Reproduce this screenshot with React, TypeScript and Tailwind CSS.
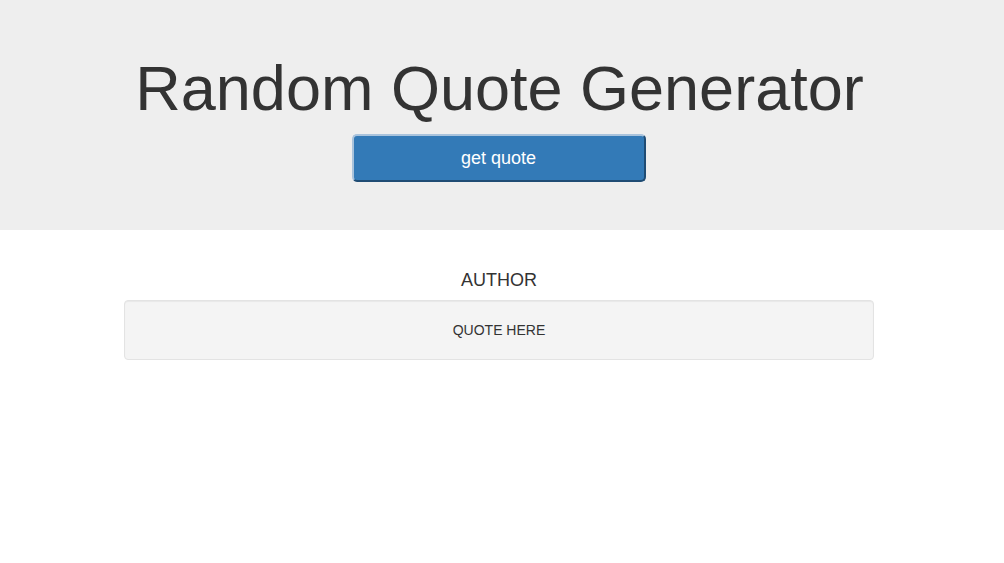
import React, { useState } from 'react';

const App: React.FC = () => {
  const [author] = useState('AUTHOR');
  const [quote] = useState('QUOTE HERE');

  return (
    <div className="min-h-[563px] bg-white text-[#333] font-['Liberation_Sans',Arial,sans-serif]">
      <div className="bg-[#eeeeee] h-[230px] pt-[54px] flex flex-col items-center pr-[5px]">
        <h1 className="text-[63px] leading-[69px] font-normal text-[#333]">Random Quote Generator</h1>
        <button className="mt-[11px] mr-[2px] w-[294px] h-[48px] bg-[#337ab7] text-white text-[18px] leading-[20px] rounded-[5px] border-2 border-t-[#a9c3dc] border-l-[#a9c3dc] border-b-[#1f4c74] border-r-[#1f4c74]">
          get quote
        </button>
      </div>

      <div className="flex flex-col items-center pt-[40px] pr-[6px]">
        <h4 className="text-[18px] leading-[20px] mb-[10px] text-[#333]">{author}</h4>
        <div className="w-[750px] bg-[#f4f4f4] border border-[#e3e3e3] rounded-[4px] p-[19px] shadow-[inset_0_1px_1px_rgba(0,0,0,0.05)] text-center text-[14px] leading-[20px] text-[#333]">
          {quote}
        </div>
      </div>
    </div>
  );
};

export default App;
